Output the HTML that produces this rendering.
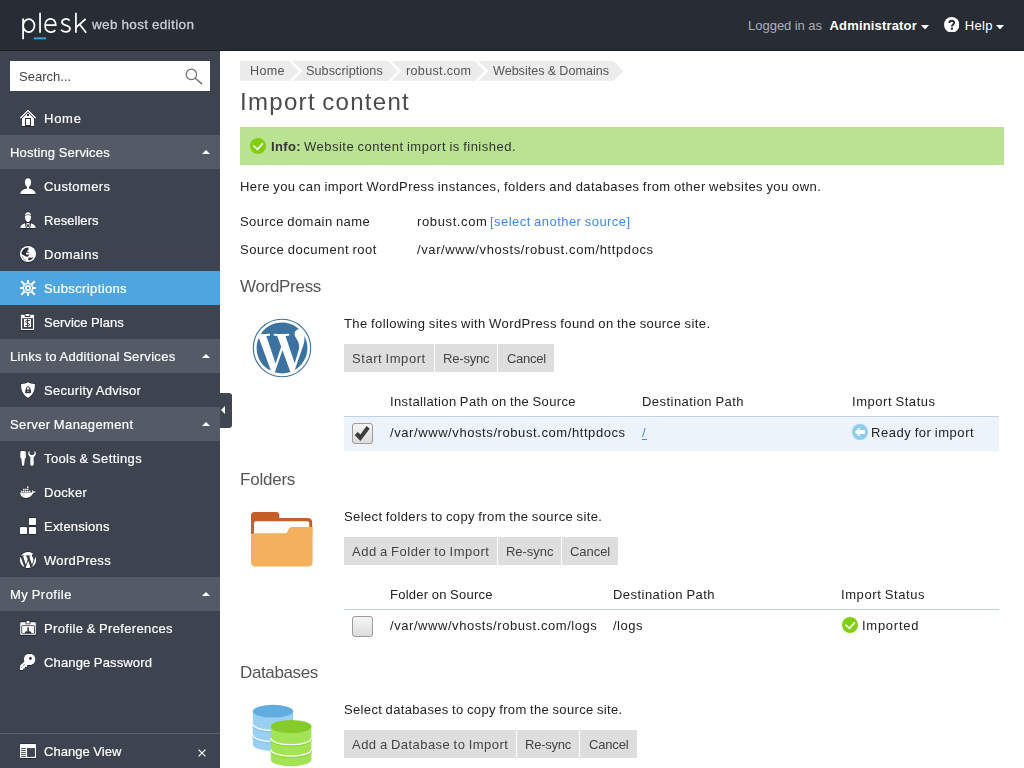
<!DOCTYPE html>
<html><head><meta charset="utf-8"><title>Import content - Plesk</title>
<style>
html,body{margin:0;padding:0;}
body{width:1024px;height:768px;overflow:hidden;position:relative;background:#fff;font-family:"Liberation Sans", sans-serif;}
.b{position:absolute;}
svg{display:block;}
.t{position:absolute;white-space:pre;display:block;}
.g{will-change:transform;}
</style></head><body>
<div class="b" style="left:0px;top:0px;width:1024px;height:50px;background:#272c35;"></div>
<div class="b" style="left:0px;top:50px;width:1024px;height:1px;background:#191d26;"></div>
<div class="b" style="left:0px;top:51px;width:220px;height:717px;background:#3d434f;"></div>
<div class="b" style="left:10px;top:61px;width:200px;height:30px;background:#fff;"></div>
<div class="b" style="left:185px;top:68px;line-height:0"><svg width="18" height="17" viewBox="0 0 18 17" ><circle cx="6.4" cy="6.4" r="5.2" fill="none" stroke="#707070" stroke-width="1.2"/><path d="M10.2 10.2 L16.6 15.6" stroke="#707070" stroke-width="1.5" stroke-linecap="round"/></svg></div>
<div class="b" style="left:20px;top:110px;line-height:0;filter:drop-shadow(0 1px 0 rgba(30,35,45,.9)) drop-shadow(0 -0.5px 0 rgba(30,35,45,.5));"><svg width="16" height="16" viewBox="0 0 16 16" >
<path d="M2 8.6 L8 2.6 L14 8.6 V16 H2 Z" fill="#fff"/>
<path d="M0.3 8.2 L8 0.5 L15.7 8.2" fill="none" stroke="#fff" stroke-width="1.25"/>
<rect x="5" y="8" width="6" height="8" fill="#2b313c"/>
<rect x="6" y="9" width="4" height="6" fill="#fff"/>
<rect x="7" y="4" width="2" height="2" fill="#2b313c"/>
</svg></div>
<div class="b" style="left:0px;top:135px;width:220px;height:34px;background:#545b66;"></div>
<div class="b" style="left:202px;top:150px;line-height:0"><svg width="8" height="4" viewBox="0 0 8 4" ><path d="M0 4 L4 0 L8 4 Z" fill="#fff"/></svg></div>
<div class="b" style="left:20px;top:178px;line-height:0;filter:drop-shadow(0 1px 0 rgba(30,35,45,.9)) drop-shadow(0 -0.5px 0 rgba(30,35,45,.5));"><svg width="16" height="16" viewBox="0 0 16 16" >
<path d="M8 0.3 C5.9 0.3 4.9 1.9 4.9 4.2 C4.9 6.4 5.7 8.3 7 9.1 V10.6 C4 11 0.6 12.4 0.3 16 H15.7 C15.4 12.4 12 11 9 10.6 V9.1 C10.3 8.3 11.1 6.4 11.1 4.2 C11.1 1.9 10.1 0.3 8 0.3 Z" fill="#fff"/>
</svg></div>
<div class="b" style="left:20px;top:212px;line-height:0;filter:drop-shadow(0 1px 0 rgba(30,35,45,.9)) drop-shadow(0 -0.5px 0 rgba(30,35,45,.5));"><svg width="16" height="16" viewBox="0 0 16 16" >
<path d="M8 0.3 C5.9 0.3 4.9 1.9 4.9 4.4 C4.9 7.2 6.2 10 8 10 C9.8 10 11.1 7.2 11.1 4.4 C11.1 1.9 10.1 0.3 8 0.3 Z" fill="#fff"/>
<path d="M4.9 4 C6 3.2 7 2.3 8.4 2.6 C9.6 2.9 10.3 3.4 11.1 4" fill="none" stroke="#2b313c" stroke-width="0.7"/>
<path d="M0.3 16 C0.5 13.2 2.6 11.6 5.6 11 H10.4 C13.4 11.6 15.5 13.2 15.7 16 Z" fill="#fff"/>
<path d="M5.4 11 L6.3 16 M10.6 11 L9.7 16" stroke="#2b313c" stroke-width="1" fill="none"/>
<path d="M6.6 11.4 L8 14.6 L9.4 11.4" stroke="#2b313c" stroke-width="0.9" fill="none"/>
<rect x="7.4" y="13.6" width="1.2" height="1.6" fill="#2b313c"/>
</svg></div>
<div class="b" style="left:20px;top:246px;line-height:0;filter:drop-shadow(0 1px 0 rgba(30,35,45,.9)) drop-shadow(0 -0.5px 0 rgba(30,35,45,.5));"><svg width="16" height="16" viewBox="0 0 16 16" >
<circle cx="8" cy="8" r="8" fill="#fff"/>
<path d="M8.6 1.6 C5 1.3 1.6 4.2 1.5 8.2 C2.2 8.6 3.4 9 4.2 9.6 C5.4 10.6 6.6 10.9 7.9 10.8 C8.3 9.8 8.8 9 9.6 8.5 C8.6 8.2 7.2 8.6 6 8.2 C5.8 7.6 6 6.9 6.4 6.4 C7.4 6.5 8.8 6.8 10 6.6 C9.4 6 8 5.8 7 5.4 C7.2 4.7 7.8 4.2 8.6 4 C8.2 3.2 8.2 2.4 8.6 1.6 Z" fill="#2b313c"/>
<path d="M8.4 11.6 C8.2 12.6 8.2 13.6 8.5 14.4 C10.6 14 12.4 13 13.4 11.2 C11.8 11.8 10 11.9 8.4 11.6 Z" fill="#2b313c"/>
<path d="M2 10.4 C2.6 12.4 4.2 13.8 6.2 14.4" fill="none" stroke="#2b313c" stroke-width="0.5"/>
</svg></div>
<div class="b" style="left:0px;top:271px;width:220px;height:34px;background:#4ea5e0;"></div>
<div class="b" style="left:20px;top:280px;line-height:0;"><svg width="16" height="16" viewBox="0 0 16 16" ><rect x="7" y="0" width="2" height="4" fill="#fff" transform="rotate(0 8 8)"/><rect x="7" y="-1.5" width="2" height="5.5" fill="#fff" transform="rotate(45 8 8)"/><rect x="7" y="0" width="2" height="4" fill="#fff" transform="rotate(90 8 8)"/><rect x="7" y="-1.5" width="2" height="5.5" fill="#fff" transform="rotate(135 8 8)"/><rect x="7" y="0" width="2" height="4" fill="#fff" transform="rotate(180 8 8)"/><rect x="7" y="-1.5" width="2" height="5.5" fill="#fff" transform="rotate(225 8 8)"/><rect x="7" y="0" width="2" height="4" fill="#fff" transform="rotate(270 8 8)"/><rect x="7" y="-1.5" width="2" height="5.5" fill="#fff" transform="rotate(315 8 8)"/>
<circle cx="8" cy="8" r="5.3" fill="#fff"/>
<circle cx="8" cy="8" r="3.6" fill="none" stroke="#3e9bdc" stroke-width="0.9"/>
<rect x="7" y="7" width="2" height="2" fill="#3e9bdc"/>
</svg></div>
<div class="b" style="left:20px;top:314px;line-height:0;filter:drop-shadow(0 1px 0 rgba(30,35,45,.9)) drop-shadow(0 -0.5px 0 rgba(30,35,45,.5));"><svg width="16" height="16" viewBox="0 0 16 16" >
<rect x="0.9" y="0.8" width="13.2" height="15.2" rx="0.8" fill="#fff"/>
<rect x="4.7" y="-0.8" width="5.6" height="3.7" rx="0.6" fill="#2b313c"/>
<rect x="5.6" y="-0.2" width="3.8" height="2.3" rx="0.4" fill="#fff"/>
<rect x="2.2" y="4.2" width="10.7" height="10.6" fill="#2b313c"/>
<rect x="3.9" y="5" width="7.2" height="8.1" fill="#fff"/>
<path d="M9.7 6.6 H6.7 C5.4 6.6 5.2 8.3 6.4 8.7 L8.7 9.5 C9.9 9.9 9.7 11.6 8.4 11.6 H5.4" fill="none" stroke="#2b313c" stroke-width="1"/>
<path d="M7.55 5.2 V13" stroke="#2b313c" stroke-width="0.9"/>
</svg></div>
<div class="b" style="left:0px;top:339px;width:220px;height:34px;background:#545b66;"></div>
<div class="b" style="left:202px;top:354px;line-height:0"><svg width="8" height="4" viewBox="0 0 8 4" ><path d="M0 4 L4 0 L8 4 Z" fill="#fff"/></svg></div>
<div class="b" style="left:20px;top:382px;line-height:0;filter:drop-shadow(0 1px 0 rgba(30,35,45,.9)) drop-shadow(0 -0.5px 0 rgba(30,35,45,.5));"><svg width="16" height="16" viewBox="0 0 16 16" >
<path d="M8 0.2 C6.4 1.4 3.6 2 1.2 1.9 C0.8 8 2.6 12.6 8 16 C13.4 12.6 15.2 8 14.8 1.9 C12.4 2 9.6 1.4 8 0.2 Z" fill="#fff"/>
<rect x="5.3" y="7.4" width="5.6" height="3.8" fill="#2b313c"/>
<path d="M6.5 7.6 V5.6 C6.5 4.6 9.7 4.6 9.7 5.6 V7.6" fill="none" stroke="#2b313c" stroke-width="1"/>
<rect x="7" y="8.5" width="2.2" height="1.6" fill="#8a8f98"/>
</svg></div>
<div class="b" style="left:0px;top:407px;width:220px;height:34px;background:#545b66;"></div>
<div class="b" style="left:202px;top:422px;line-height:0"><svg width="8" height="4" viewBox="0 0 8 4" ><path d="M0 4 L4 0 L8 4 Z" fill="#fff"/></svg></div>
<div class="b" style="left:20px;top:450px;line-height:0;filter:drop-shadow(0 1px 0 rgba(30,35,45,.9)) drop-shadow(0 -0.5px 0 rgba(30,35,45,.5));"><svg width="16" height="16" viewBox="0 0 16 16" >
<path d="M0.3 2.6 C0.3 1.4 1.2 1 3.1 1 C5 1 5.9 1.4 5.9 2.6 V7.4 C5.9 8 5.4 8.2 5 8.4 L4.1 15.2 C4 16 2.2 16 2.1 15.2 L1.2 8.4 C0.8 8.2 0.3 8 0.3 7.4 Z" fill="#fff"/>
<path d="M9.6 1 C8.2 1.7 8.2 3 8.2 3.8 C8.2 5.4 9.2 6.4 10.3 6.9 V14.6 C10.3 16.4 13.7 16.4 13.7 14.6 V6.9 C14.8 6.4 15.8 5.4 15.8 3.8 C15.8 3 15.8 1.7 14.4 1 V3.6 C14.4 4.6 13.4 5 12 5 C10.6 5 9.6 4.6 9.6 3.6 Z" fill="#fff"/>
</svg></div>
<div class="b" style="left:20px;top:484px;line-height:0;filter:drop-shadow(0 1px 0 rgba(30,35,45,.9)) drop-shadow(0 -0.5px 0 rgba(30,35,45,.5));"><svg width="16" height="16" viewBox="0 0 16 16" >
<path d="M0.2 8.6 H11.6 C12.2 8.4 12.4 7.6 12.2 6.6 C12.1 6.2 12.4 5.9 12.7 6.2 C13.2 6.8 13.6 7.2 13.8 7.5 C14.6 7.3 15.4 7.4 15.9 7.8 C15.4 8.6 14.4 8.9 13.4 8.8 C12.2 11.8 9.6 13.9 5.9 13.9 C2.4 13.9 0.2 12 0.2 8.6 Z" fill="#fff"/>
<g fill="#fff">
<rect x="1" y="6.7" width="1.5" height="1.5"/><rect x="3" y="6.7" width="1.5" height="1.5"/><rect x="5" y="6.7" width="1.5" height="1.5"/><rect x="7" y="6.7" width="1.5" height="1.5"/><rect x="9" y="6.7" width="1.5" height="1.5"/>
<rect x="3" y="4.7" width="1.5" height="1.5"/><rect x="5" y="4.7" width="1.5" height="1.5"/><rect x="7" y="4.7" width="1.5" height="1.5"/>
<rect x="7" y="2.4" width="1.5" height="1.8"/>
</g>
<path d="M2.6 10.4 L3.6 9.6 L4.6 10.4 L3.6 11.2 Z" fill="none" stroke="#9aa0a8" stroke-width="0.5"/>
</svg></div>
<div class="b" style="left:20px;top:518px;line-height:0;filter:drop-shadow(0 1px 0 rgba(30,35,45,.9)) drop-shadow(0 -0.5px 0 rgba(30,35,45,.5));"><svg width="16" height="16" viewBox="0 0 16 16" >
<rect x="9" y="0" width="7" height="7" rx="0.8" fill="#fff"/>
<rect x="0" y="9" width="7" height="7" rx="0.8" fill="#fff"/>
<rect x="9" y="9" width="7" height="7" rx="0.8" fill="#fff"/>
</svg></div>
<div class="b" style="left:20px;top:552px;line-height:0;filter:drop-shadow(0 1px 0 rgba(30,35,45,.9)) drop-shadow(0 -0.5px 0 rgba(30,35,45,.5));"><svg width="16" height="16" viewBox="0 0 16 16" ><g transform="translate(-0.953,-0.953) scale(0.7461)"><path d="M21.469 6.825c.84 1.537 1.318 3.3 1.318 5.175 0 3.979-2.156 7.456-5.363 9.325l3.295-9.527c.615-1.54.82-2.771.82-3.864 0-.405-.026-.78-.07-1.11m-7.981.105c.647-.03 1.232-.105 1.232-.105.582-.075.514-.93-.067-.899 0 0-1.755.135-2.88.135-1.064 0-2.85-.15-2.85-.15-.585-.03-.661.855-.075.885 0 0 .54.061 1.125.09l1.68 4.605-2.37 7.08L5.354 6.9c.649-.03 1.234-.1 1.234-.1.585-.075.516-.93-.065-.896 0 0-1.746.138-2.874.138-.2 0-.438-.008-.69-.015C4.911 3.15 8.235 1.215 12 1.215c2.809 0 5.365 1.072 7.286 2.833-.046-.003-.091-.009-.141-.009-1.06 0-1.812.923-1.812 1.914 0 .89.513 1.643 1.06 2.531.411.72.89 1.643.89 2.977 0 .915-.354 1.994-.821 3.479l-1.075 3.585-3.9-11.61.001.014zM12 22.784c-1.059 0-2.081-.153-3.048-.437l3.237-9.406 3.315 9.087c.024.053.05.101.078.149-1.12.393-2.325.609-3.582.609M1.211 12c0-1.564.336-3.05.935-4.39L7.29 21.709C3.694 19.96 1.212 16.271 1.211 12" fill="#fff"/></g></svg></div>
<div class="b" style="left:0px;top:577px;width:220px;height:34px;background:#545b66;"></div>
<div class="b" style="left:202px;top:592px;line-height:0"><svg width="8" height="4" viewBox="0 0 8 4" ><path d="M0 4 L4 0 L8 4 Z" fill="#fff"/></svg></div>
<div class="b" style="left:20px;top:620px;line-height:0;filter:drop-shadow(0 1px 0 rgba(30,35,45,.9)) drop-shadow(0 -0.5px 0 rgba(30,35,45,.5));"><svg width="16" height="16" viewBox="0 0 16 16" >
<rect x="0.2" y="2.2" width="15.6" height="12.9" rx="1.4" fill="#fff"/>
<path d="M5.6 4.2 V1.4 L8 -0.2 L10.4 1.4 V4.2 Z" fill="#2b313c"/>
<path d="M6.4 3.4 V1.8 L8 0.6 L9.6 1.8 V3.4 Z" fill="#fff"/>
<rect x="1.7" y="5.6" width="12.8" height="8.2" rx="0.6" fill="none" stroke="#2b313c" stroke-width="0.8"/>
<rect x="7.3" y="7.4" width="1.6" height="4" fill="#2b313c"/>
<path d="M4.2 13.6 L6 11.2 H10.2 L12 13.6 Z" fill="#2b313c"/>
</svg></div>
<div class="b" style="left:20px;top:654px;line-height:0;filter:drop-shadow(0 1px 0 rgba(30,35,45,.9)) drop-shadow(0 -0.5px 0 rgba(30,35,45,.5));"><svg width="16" height="16" viewBox="0 0 16 16" >
<circle cx="9.6" cy="5.4" r="5.7" fill="#fff"/>
<path d="M4.4 7.4 L0 11.7 V16 H3.1 V14.6 H4.9 V13 H6.9 V11.4 L9 10.4 Z" fill="#fff"/>
<circle cx="10.4" cy="4.5" r="1.4" fill="#2b313c"/>
<path d="M1.3 13.5 L4.9 10.1" stroke="#2b313c" stroke-width="0.7" stroke-dasharray="0.9 0.45"/>
</svg></div>
<div class="b" style="left:0px;top:733px;width:220px;height:1px;background:#5b626d;"></div>
<div class="b" style="left:20px;top:744px;line-height:0;filter:drop-shadow(0 1px 0 rgba(30,35,45,.9)) drop-shadow(0 -0.5px 0 rgba(30,35,45,.5));"><svg width="16" height="14" viewBox="0 0 16 14" >
<rect x="0" y="0" width="16" height="14" rx="0.8" fill="#fff"/>
<rect x="7.4" y="4.5" width="7.2" height="8" fill="#3d434f" stroke="#2b313c" stroke-width="0.7"/>
<path d="M1.1 4.6 H5.8 M1.1 6.6 H5.8 M1.1 8.6 H5.8 M1.1 10.6 H5.8 M1.1 12.6 H5.8" stroke="#2b313c" stroke-width="0.9"/>
</svg></div>
<div class="b" style="left:198px;top:748.5px;line-height:0"><svg width="8" height="8" viewBox="0 0 8 8" ><path d="M0.6 0.6 L7.4 7.4 M7.4 0.6 L0.6 7.4" stroke="#fff" stroke-width="1.3"/></svg></div>
<div class="b" style="left:220px;top:393px;width:12px;height:34.7px;background:#3f4551;border-radius:0 3px 3px 0;"></div>
<div class="b" style="left:221px;top:406px;line-height:0"><svg width="4" height="8" viewBox="0 0 4 8" ><path d="M4 0 L0 4 L4 8 Z" fill="#fff"/></svg></div>
<div class="b" style="left:921.1px;top:24.6px;line-height:0"><svg width="8" height="4.5" viewBox="0 0 8 4.5" ><path d="M0 0 H8 L4 4.5 Z" fill="#fff"/></svg></div>
<div class="b" style="left:995.6px;top:24.6px;line-height:0"><svg width="8" height="4.5" viewBox="0 0 8 4.5" ><path d="M0 0 H8 L4 4.5 Z" fill="#fff"/></svg></div>
<div class="b" style="left:943.8px;top:16.6px;line-height:0"><svg width="15.4" height="15.4" viewBox="0 0 16 16" ><circle cx="8" cy="8" r="8" fill="#fff"/><path d="M5.6 6.2 C5.6 3.2 10.6 3.2 10.6 6 C10.6 7.8 8.2 7.8 8.2 9.8" fill="none" stroke="#272c35" stroke-width="2"/><rect x="7.1" y="11" width="2.2" height="2.2" fill="#272c35"/></svg></div>
<div class="b" style="left:0px;top:0px;line-height:0"><svg width="100" height="50" viewBox="0 0 100 50" ><g fill="none" stroke="#fff" stroke-width="1.75">
<path d="M23.1 18.4 V39.3"/><ellipse cx="28.8" cy="25.6" rx="5.7" ry="6.4"/>
<path d="M40.05 12.7 V32.7"/>
<path d="M45.1 25.2 H55.8 C55.8 16.6 45.1 16.9 45.1 25.4 C45.1 33 52.8 33.4 55.3 29.9"/>
<path d="M69.6 20.6 C67.6 18.2 62 18.4 62 22 C62 26.6 70 24.2 70 28.8 C70 32.6 63.4 32.8 61 29.8"/>
<path d="M75.9 12.7 V32.7 M85.6 19 L76.4 27.2 M79.6 24.2 L86.2 32.7"/>
</g>
<rect x="33.8" y="37.4" width="12.2" height="1.9" fill="#35aae1"/></svg></div>
<div class="b" style="left:0px;top:0px;line-height:0"><svg width="1024" height="90" viewBox="0 0 1024 90" ><path d="M240 61 H289 L299 71 L289 81 H240 Z" fill="#ececec"/><path d="M292.4 61 H388 L398 71 L388 81 H292.4 L302.4 71 Z" fill="#ececec"/><path d="M391.4 61 H475 L485 71 L475 81 H391.4 L401.4 71 Z" fill="#ececec"/><path d="M478.4 61 H613.5 L623.5 71 L613.5 81 H478.4 L488.4 71 Z" fill="#ececec"/></svg></div>
<div class="b" style="left:240px;top:127px;width:764px;height:38px;background:#bae293;"></div>
<div class="b" style="left:250px;top:138px;line-height:0"><svg width="16" height="16" viewBox="0 0 16 16" ><circle cx="8" cy="8" r="8" fill="#80cf0f"/><path d="M3.3 7.6 L7.5 11.4 L12.8 5.4" fill="none" stroke="#fff" stroke-width="1.6"/></svg></div>
<div class="b" style="left:251.95px;top:318.3px;line-height:0"><svg width="60" height="60" viewBox="0 0 60 60" ><circle cx="30" cy="30" r="28.7" fill="none" stroke="#3c729f" stroke-width="1.1"/><g transform="translate(1.752,1.752) scale(2.3540)"><path d="M21.469 6.825c.84 1.537 1.318 3.3 1.318 5.175 0 3.979-2.156 7.456-5.363 9.325l3.295-9.527c.615-1.54.82-2.771.82-3.864 0-.405-.026-.78-.07-1.11m-7.981.105c.647-.03 1.232-.105 1.232-.105.582-.075.514-.93-.067-.899 0 0-1.755.135-2.88.135-1.064 0-2.85-.15-2.85-.15-.585-.03-.661.855-.075.885 0 0 .54.061 1.125.09l1.68 4.605-2.37 7.08L5.354 6.9c.649-.03 1.234-.1 1.234-.1.585-.075.516-.93-.065-.896 0 0-1.746.138-2.874.138-.2 0-.438-.008-.69-.015C4.911 3.15 8.235 1.215 12 1.215c2.809 0 5.365 1.072 7.286 2.833-.046-.003-.091-.009-.141-.009-1.06 0-1.812.923-1.812 1.914 0 .89.513 1.643 1.06 2.531.411.72.89 1.643.89 2.977 0 .915-.354 1.994-.821 3.479l-1.075 3.585-3.9-11.61.001.014zM12 22.784c-1.059 0-2.081-.153-3.048-.437l3.237-9.406 3.315 9.087c.024.053.05.101.078.149-1.12.393-2.325.609-3.582.609M1.211 12c0-1.564.336-3.05.935-4.39L7.29 21.709C3.694 19.96 1.212 16.271 1.211 12" fill="#3c729f"/></g></svg></div>
<div class="b" style="left:344px;top:344px;width:90px;height:28px;background:#dedede;"></div><div class="b" style="left:435px;top:344px;width:62px;height:28px;background:#dedede;"></div><div class="b" style="left:498px;top:344px;width:56px;height:28px;background:#dedede;"></div>
<div class="b" style="left:344px;top:537px;width:153px;height:28px;background:#dedede;"></div><div class="b" style="left:498px;top:537px;width:63px;height:28px;background:#dedede;"></div><div class="b" style="left:562px;top:537px;width:56px;height:28px;background:#dedede;"></div>
<div class="b" style="left:344px;top:730px;width:172px;height:28px;background:#dedede;"></div><div class="b" style="left:517px;top:730px;width:62px;height:28px;background:#dedede;"></div><div class="b" style="left:580px;top:730px;width:57px;height:28px;background:#dedede;"></div>
<div class="b" style="left:344px;top:416px;width:655px;height:1px;background:#c3d2e3;"></div>
<div class="b" style="left:344px;top:417px;width:655px;height:34px;background:#ecf3fa;"></div>
<div class="b" style="left:352px;top:423px;line-height:0"><svg width="21" height="21" viewBox="0 0 21 21" ><defs><linearGradient id="cg423" x1="0" y1="0" x2="0" y2="1"><stop offset="0" stop-color="#f6f6f6"/><stop offset="1" stop-color="#dcdcdc"/></linearGradient></defs><rect x="0.5" y="0.5" width="20" height="20" rx="2.5" fill="url(#cg423)" stroke="#9b9b9b"/><path d="M2.7 12 L5.8 8.9 L8.4 11.5 L14.6 3.1 L17.7 5.8 L8.4 17.9 Z" fill="#3c3c3c"/></svg></div>
<div class="b" style="left:642.4px;top:439px;width:4.4px;height:1px;background:#4487df;"></div>
<div class="b" style="left:852px;top:424px;line-height:0"><svg width="16" height="16" viewBox="0 0 16 16" ><circle cx="8" cy="8" r="8" fill="#8ecdef"/><path d="M2.9 8 L7.6 3.2 V6 H12.9 V10 H7.6 V12.8 Z" fill="#fff"/></svg></div>
<div class="b" style="left:251.2px;top:512px;line-height:0"><svg width="62" height="55" viewBox="0 0 62 55" ><path d="M0 3.5 Q0 0 3.5 0 H25 Q28.3 0 28.3 3.3 V6 H56.6 Q61.2 6 61.2 10.6 V22 H0 Z" fill="#c65f27"/>
<rect x="3" y="9.3" width="55.2" height="16" rx="2" fill="#fdfdfd"/>
<path d="M0 24.3 Q0 21.3 3 21.3 H33 Q36 21.3 37 18.4 Q38 15 41.5 15 H61.6 V50 Q61.6 54.6 57 54.6 H4.6 Q0 54.6 0 50 Z" fill="#f4b05c"/></svg></div>
<div class="b" style="left:344px;top:609px;width:655px;height:1px;background:#c3d2e3;"></div>
<div class="b" style="left:352px;top:616px;line-height:0"><svg width="21" height="21" viewBox="0 0 21 21" ><defs><linearGradient id="cg616" x1="0" y1="0" x2="0" y2="1"><stop offset="0" stop-color="#f6f6f6"/><stop offset="1" stop-color="#dcdcdc"/></linearGradient></defs><rect x="0.5" y="0.5" width="20" height="20" rx="2.5" fill="url(#cg616)" stroke="#9b9b9b"/></svg></div>
<div class="b" style="left:842px;top:617px;line-height:0"><svg width="16" height="16" viewBox="0 0 16 16" ><circle cx="8" cy="8" r="8" fill="#80cf0f"/><path d="M3.3 7.6 L7.5 11.4 L12.8 5.4" fill="none" stroke="#fff" stroke-width="1.6"/></svg></div>
<div class="b" style="left:250px;top:700px;line-height:0"><svg width="64" height="68" viewBox="0 0 64 68" ><path d="M2.8000000000000007 11.2 V44.5 A20.2 6.4 0 0 0 43.2 44.5 V11.2 Z" fill="#98cff3"/><path d="M2.8000000000000007 25.2 A20.2 6.4 0 0 0 43.2 25.2" fill="none" stroke="#86c3ee" stroke-width="1.6"/><path d="M2.8000000000000007 24 A20.2 6.4 0 0 0 43.2 24" fill="none" stroke="#fff" stroke-width="1.3"/><path d="M2.8000000000000007 36.2 A20.2 6.4 0 0 0 43.2 36.2" fill="none" stroke="#86c3ee" stroke-width="1.6"/><path d="M2.8000000000000007 35 A20.2 6.4 0 0 0 43.2 35" fill="none" stroke="#fff" stroke-width="1.3"/><ellipse cx="23" cy="11.2" rx="20.2" ry="6.4" fill="#62acdf"/><path d="M20.8 26.5 V59.7 A20.3 6.6 0 0 0 61.400000000000006 59.7 V26.5 Z" fill="#a3e356"/><path d="M20.8 39.300000000000004 A20.3 6.6 0 0 0 61.400000000000006 39.300000000000004" fill="none" stroke="#8fd63c" stroke-width="1.6"/><path d="M20.8 38.1 A20.3 6.6 0 0 0 61.400000000000006 38.1" fill="none" stroke="#fff" stroke-width="1.3"/><path d="M20.8 50.7 A20.3 6.6 0 0 0 61.400000000000006 50.7" fill="none" stroke="#8fd63c" stroke-width="1.6"/><path d="M20.8 49.5 A20.3 6.6 0 0 0 61.400000000000006 49.5" fill="none" stroke="#fff" stroke-width="1.3"/><ellipse cx="41.1" cy="26.5" rx="20.3" ry="6.6" fill="#85cb2a"/></svg></div>
<span class="t g" style="left:91.70px;top:17.00px;font-size:13.5px;line-height:15px;font-weight:400;color:#cdcfd2;letter-spacing:0.375px;word-spacing:-0.618px;-webkit-text-stroke:0.3px #cdcfd2;">web host edition</span>
<span class="t" style="left:747.98px;top:18.00px;font-size:13px;line-height:15px;font-weight:400;color:#adb0b5;letter-spacing:-0.003px;word-spacing:-0.231px;">Logged in as</span>
<span class="t" style="left:829.56px;top:18.00px;font-size:13px;line-height:15px;font-weight:700;color:#fff;letter-spacing:0.159px;word-spacing:0.000px;">Administrator</span>
<span class="t" style="left:964.86px;top:18.00px;font-size:13px;line-height:15px;font-weight:400;color:#fff;letter-spacing:0.318px;word-spacing:0.000px;">Help</span>
<span class="t g" style="left:18.90px;top:69.00px;font-size:13px;line-height:15px;font-weight:400;color:#444;letter-spacing:0.016px;word-spacing:0.000px;">Search...</span>
<span class="t g" style="left:44.00px;top:111.00px;font-size:13px;line-height:15px;font-weight:400;color:#fff;letter-spacing:0.751px;word-spacing:0.000px;-webkit-text-stroke:0.2px #fff;">Home</span>
<span class="t g" style="left:10.00px;top:145.00px;font-size:13px;line-height:15px;font-weight:400;color:#fff;letter-spacing:0.170px;word-spacing:-0.404px;-webkit-text-stroke:0.2px #fff;">Hosting Services</span>
<span class="t g" style="left:44.00px;top:179.00px;font-size:13px;line-height:15px;font-weight:400;color:#fff;letter-spacing:0.401px;word-spacing:0.000px;-webkit-text-stroke:0.2px #fff;">Customers</span>
<span class="t g" style="left:44.00px;top:213.00px;font-size:13px;line-height:15px;font-weight:400;color:#fff;letter-spacing:0.040px;word-spacing:0.000px;-webkit-text-stroke:0.2px #fff;">Resellers</span>
<span class="t g" style="left:44.00px;top:247.00px;font-size:13px;line-height:15px;font-weight:400;color:#fff;letter-spacing:0.534px;word-spacing:0.000px;-webkit-text-stroke:0.2px #fff;">Domains</span>
<span class="t g" style="left:44.00px;top:281.00px;font-size:13px;line-height:15px;font-weight:400;color:#fff;letter-spacing:0.382px;word-spacing:0.000px;-webkit-text-stroke:0.2px #fff;">Subscriptions</span>
<span class="t g" style="left:44.00px;top:315.00px;font-size:13px;line-height:15px;font-weight:400;color:#fff;letter-spacing:0.040px;word-spacing:-0.274px;-webkit-text-stroke:0.2px #fff;">Service Plans</span>
<span class="t g" style="left:10.00px;top:349.00px;font-size:13px;line-height:15px;font-weight:400;color:#fff;letter-spacing:0.319px;word-spacing:-0.553px;-webkit-text-stroke:0.2px #fff;">Links to Additional Services</span>
<span class="t g" style="left:44.00px;top:383.00px;font-size:13px;line-height:15px;font-weight:400;color:#fff;letter-spacing:0.273px;word-spacing:-0.507px;-webkit-text-stroke:0.2px #fff;">Security Advisor</span>
<span class="t g" style="left:10.00px;top:417.00px;font-size:13px;line-height:15px;font-weight:400;color:#fff;letter-spacing:0.367px;word-spacing:-0.601px;-webkit-text-stroke:0.2px #fff;">Server Management</span>
<span class="t g" style="left:44.00px;top:451.00px;font-size:13px;line-height:15px;font-weight:400;color:#fff;letter-spacing:0.379px;word-spacing:-0.613px;-webkit-text-stroke:0.2px #fff;">Tools &amp; Settings</span>
<span class="t g" style="left:44.00px;top:485.00px;font-size:13px;line-height:15px;font-weight:400;color:#fff;letter-spacing:0.330px;word-spacing:0.000px;-webkit-text-stroke:0.2px #fff;">Docker</span>
<span class="t g" style="left:44.00px;top:519.00px;font-size:13px;line-height:15px;font-weight:400;color:#fff;letter-spacing:0.212px;word-spacing:0.000px;-webkit-text-stroke:0.2px #fff;">Extensions</span>
<span class="t g" style="left:44.00px;top:553.00px;font-size:13px;line-height:15px;font-weight:400;color:#fff;letter-spacing:0.328px;word-spacing:0.000px;-webkit-text-stroke:0.2px #fff;">WordPress</span>
<span class="t g" style="left:10.00px;top:587.00px;font-size:13px;line-height:15px;font-weight:400;color:#fff;letter-spacing:0.484px;word-spacing:-0.718px;-webkit-text-stroke:0.2px #fff;">My Profile</span>
<span class="t g" style="left:44.00px;top:621.00px;font-size:13px;line-height:15px;font-weight:400;color:#fff;letter-spacing:0.347px;word-spacing:-0.581px;-webkit-text-stroke:0.2px #fff;">Profile &amp; Preferences</span>
<span class="t g" style="left:44.00px;top:655.00px;font-size:13px;line-height:15px;font-weight:400;color:#fff;letter-spacing:0.149px;word-spacing:-0.383px;-webkit-text-stroke:0.2px #fff;">Change Password</span>
<span class="t g" style="left:44.00px;top:744.00px;font-size:13px;line-height:15px;font-weight:400;color:#fff;letter-spacing:0.052px;word-spacing:-0.286px;-webkit-text-stroke:0.2px #fff;">Change View</span>
<span class="t g" style="left:250.05px;top:64.00px;font-size:12.6px;line-height:14px;font-weight:400;color:#555;letter-spacing:0.327px;word-spacing:0.000px;">Home</span>
<span class="t g" style="left:305.70px;top:64.00px;font-size:12.6px;line-height:14px;font-weight:400;color:#555;letter-spacing:0.095px;word-spacing:0.000px;">Subscriptions</span>
<span class="t g" style="left:405.85px;top:64.00px;font-size:12.6px;line-height:14px;font-weight:400;color:#555;letter-spacing:0.313px;word-spacing:0.000px;">robust.com</span>
<span class="t g" style="left:492.68px;top:64.00px;font-size:12.6px;line-height:14px;font-weight:400;color:#555;letter-spacing:-0.017px;word-spacing:-0.209px;">Websites &amp; Domains</span>
<span class="t g" style="left:240.00px;top:88.00px;font-size:24px;line-height:27px;font-weight:400;color:#4a4a4a;letter-spacing:1.317px;word-spacing:-1.749px;">Import content</span>
<span class="t g" style="left:271.28px;top:139.00px;font-size:13px;line-height:15px;font-weight:700;color:#333;letter-spacing:0.369px;word-spacing:0.000px;">Info:</span>
<span class="t g" style="left:303.78px;top:139.00px;font-size:13px;line-height:15px;font-weight:400;color:#333;letter-spacing:0.490px;word-spacing:-0.724px;">Website content import is finished.</span>
<span class="t g" style="left:240.00px;top:179.00px;font-size:13px;line-height:15px;font-weight:400;color:#222;letter-spacing:0.425px;word-spacing:-0.659px;">Here you can import WordPress instances, folders and databases from other websites you own.</span>
<span class="t g" style="left:240.00px;top:214.00px;font-size:13px;line-height:15px;font-weight:400;color:#222;letter-spacing:0.447px;word-spacing:-0.681px;">Source domain name</span>
<span class="t g" style="left:417.00px;top:214.00px;font-size:13px;line-height:15px;font-weight:400;color:#222;letter-spacing:0.622px;word-spacing:0.000px;">robust.com</span>
<span class="t g" style="left:489.60px;top:214.00px;font-size:13px;line-height:15px;font-weight:400;color:#4487df;letter-spacing:0.452px;word-spacing:-0.686px;">[select another source]</span>
<span class="t g" style="left:240.00px;top:242.00px;font-size:13px;line-height:15px;font-weight:400;color:#222;letter-spacing:0.532px;word-spacing:-0.766px;">Source document root</span>
<span class="t g" style="left:417.00px;top:242.00px;font-size:13px;line-height:15px;font-weight:400;color:#222;letter-spacing:0.612px;word-spacing:0.000px;">/var/www/vhosts/robust.com/httpdocs</span>
<span class="t g" style="left:240.00px;top:277.00px;font-size:17px;line-height:19px;font-weight:400;color:#555;letter-spacing:-0.305px;word-spacing:0.000px;">WordPress</span>
<span class="t g" style="left:344.00px;top:316.00px;font-size:13px;line-height:15px;font-weight:400;color:#222;letter-spacing:0.417px;word-spacing:-0.651px;">The following sites with WordPress found on the source site.</span>
<span class="t g" style="left:351.76px;top:351.00px;font-size:13px;line-height:15px;font-weight:400;color:#444;letter-spacing:0.550px;word-spacing:-0.784px;">Start Import</span>
<span class="t g" style="left:442.71px;top:351.00px;font-size:13px;line-height:15px;font-weight:400;color:#444;letter-spacing:-0.186px;word-spacing:0.000px;">Re-sync</span>
<span class="t g" style="left:506.56px;top:351.00px;font-size:13px;line-height:15px;font-weight:400;color:#444;letter-spacing:-0.264px;word-spacing:0.000px;">Cancel</span>
<span class="t g" style="left:390.00px;top:394.00px;font-size:13px;line-height:15px;font-weight:400;color:#222;letter-spacing:0.362px;word-spacing:-0.596px;">Installation Path on the Source</span>
<span class="t g" style="left:641.57px;top:394.00px;font-size:13px;line-height:15px;font-weight:400;color:#222;letter-spacing:0.452px;word-spacing:-0.686px;">Destination Path</span>
<span class="t g" style="left:851.56px;top:394.00px;font-size:13px;line-height:15px;font-weight:400;color:#222;letter-spacing:0.544px;word-spacing:-0.778px;">Import Status</span>
<span class="t g" style="left:390.00px;top:425.00px;font-size:13px;line-height:15px;font-weight:400;color:#222;letter-spacing:0.583px;word-spacing:0.000px;">/var/www/vhosts/robust.com/httpdocs</span>
<span class="t g" style="left:642.24px;top:425.00px;font-size:13px;line-height:15px;font-weight:400;color:#4487df;letter-spacing:0.000px;word-spacing:0.000px;">/</span>
<span class="t g" style="left:871.06px;top:425.00px;font-size:13px;line-height:15px;font-weight:400;color:#222;letter-spacing:0.538px;word-spacing:-0.772px;">Ready for import</span>
<span class="t g" style="left:240.00px;top:470.00px;font-size:17px;line-height:19px;font-weight:400;color:#555;letter-spacing:-0.228px;word-spacing:0.000px;">Folders</span>
<span class="t g" style="left:344.00px;top:509.00px;font-size:13px;line-height:15px;font-weight:400;color:#222;letter-spacing:0.386px;word-spacing:-0.620px;">Select folders to copy from the source site.</span>
<span class="t g" style="left:352.30px;top:544.00px;font-size:13px;line-height:15px;font-weight:400;color:#444;letter-spacing:0.498px;word-spacing:-0.732px;">Add a Folder to Import</span>
<span class="t g" style="left:506.30px;top:544.00px;font-size:13px;line-height:15px;font-weight:400;color:#444;letter-spacing:-0.030px;word-spacing:0.000px;">Re-sync</span>
<span class="t g" style="left:570.18px;top:544.00px;font-size:13px;line-height:15px;font-weight:400;color:#444;letter-spacing:-0.052px;word-spacing:0.000px;">Cancel</span>
<span class="t g" style="left:390.00px;top:587.00px;font-size:13px;line-height:15px;font-weight:400;color:#222;letter-spacing:0.254px;word-spacing:-0.488px;">Folder on Source</span>
<span class="t g" style="left:612.56px;top:587.00px;font-size:13px;line-height:15px;font-weight:400;color:#222;letter-spacing:0.452px;word-spacing:-0.686px;">Destination Path</span>
<span class="t g" style="left:841.06px;top:587.00px;font-size:13px;line-height:15px;font-weight:400;color:#222;letter-spacing:0.590px;word-spacing:-0.824px;">Import Status</span>
<span class="t g" style="left:390.00px;top:618.00px;font-size:13px;line-height:15px;font-weight:400;color:#222;letter-spacing:0.562px;word-spacing:0.000px;">/var/www/vhosts/robust.com/logs</span>
<span class="t g" style="left:613.18px;top:618.00px;font-size:13px;line-height:15px;font-weight:400;color:#222;letter-spacing:0.495px;word-spacing:0.000px;">/logs</span>
<span class="t g" style="left:861.68px;top:618.00px;font-size:13px;line-height:15px;font-weight:400;color:#222;letter-spacing:0.733px;word-spacing:0.000px;">Imported</span>
<span class="t g" style="left:240.00px;top:663.00px;font-size:17px;line-height:19px;font-weight:400;color:#555;letter-spacing:-0.369px;word-spacing:0.000px;">Databases</span>
<span class="t g" style="left:344.00px;top:702.00px;font-size:13px;line-height:15px;font-weight:400;color:#222;letter-spacing:0.347px;word-spacing:-0.581px;">Select databases to copy from the source site.</span>
<span class="t g" style="left:351.68px;top:737.00px;font-size:13px;line-height:15px;font-weight:400;color:#444;letter-spacing:0.456px;word-spacing:-0.690px;">Add a Database to Import</span>
<span class="t g" style="left:524.62px;top:737.00px;font-size:13px;line-height:15px;font-weight:400;color:#444;letter-spacing:-0.226px;word-spacing:0.000px;">Re-sync</span>
<span class="t g" style="left:589.12px;top:737.00px;font-size:13px;line-height:15px;font-weight:400;color:#444;letter-spacing:-0.164px;word-spacing:0.000px;">Cancel</span>
</body></html>
